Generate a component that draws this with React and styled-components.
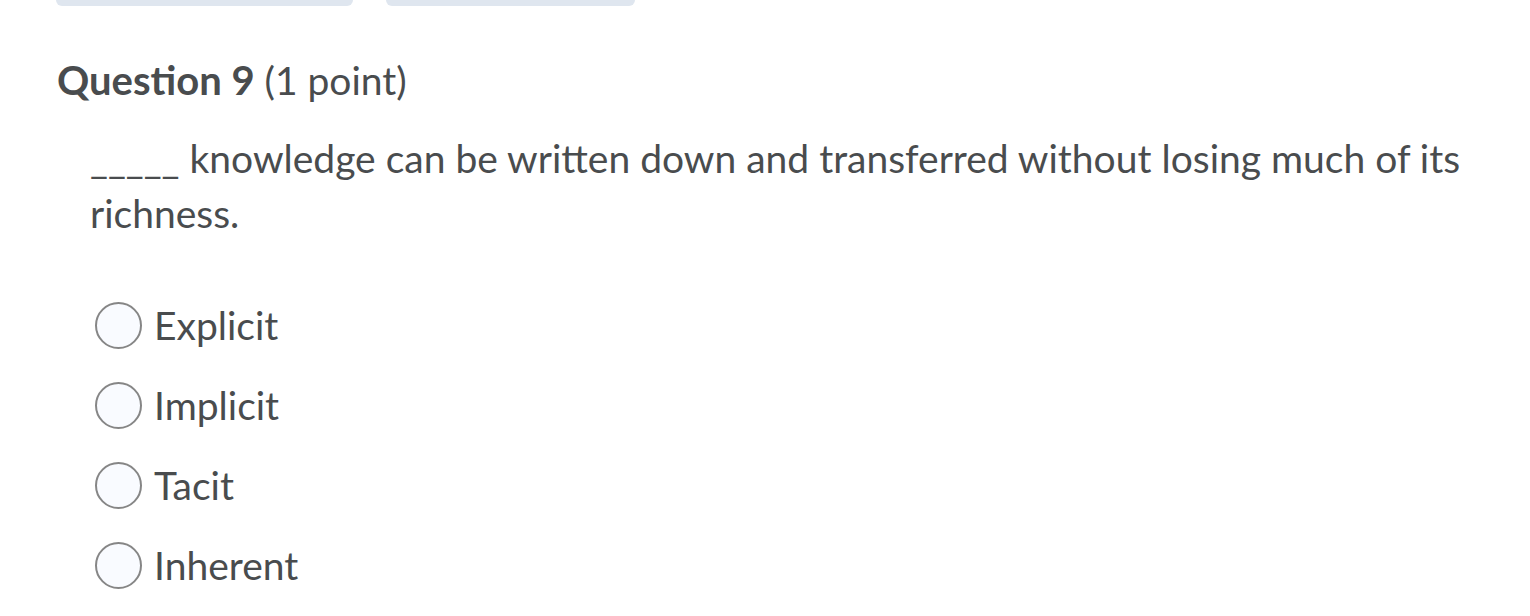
import React from "react"
import styled, { createGlobalStyle } from "styled-components"

const GlobalStyle = createGlobalStyle`
  html, body {
    margin: 0;
    padding: 0;
    background: #fff;
  }
  body {
    font-family: Lato, "Noto Sans", sans-serif;
    color: #494c4e;
  }
`

const Page = styled.div`
  width: 1530px;
  height: 616px;
  overflow: hidden;
`

const TopBar = styled.div`
  display: flex;
  gap: 33px;
  padding-left: 56px;
`

const TabButton = styled.div`
  width: ${(p) => p.w}px;
  height: 6px;
  background: #dfe6ef;
  border-radius: 0 0 10px 10px;
`

const Question = styled.section`
  padding: 52px 0 0 57px;
`

const Heading = styled.h2`
  margin: 0;
  font-size: 40px;
  line-height: 44px;
  font-weight: 700;
  color: #494c4e;
  span {
    font-weight: 400;
    font-size: 39px;
  }
`

const Prompt = styled.p`
  margin: 29px 0 0 33px;
  width: 1400px;
  font-size: 39px;
  line-height: 55px;
`

const Options = styled.ul`
  list-style: none;
  margin: 61px 0 0 38px;
  padding: 0;
  display: flex;
  flex-direction: column;
  gap: 34px;
`

const Option = styled.li`
  display: flex;
  align-items: center;
  gap: 12px;
  height: 46px;
  font-size: 39px;
`

const Radio = styled.span`
  box-sizing: border-box;
  width: 47px;
  height: 47px;
  border-radius: 50%;
  border: 2px solid #868686;
  background: #f9fbff;
  flex-shrink: 0;
`

const choices = ["Explicit", "Implicit", "Tacit", "Inherent"]

export default function App() {
  return (
    <Page>
      <GlobalStyle />
      <TopBar>
        <TabButton w={297} />
        <TabButton w={249} />
      </TopBar>
      <Question>
        <Heading>
          Question 9 <span>(1 point)</span>
        </Heading>
        <Prompt>
          _____ knowledge can be written down and transferred without losing much of its richness.
        </Prompt>
        <Options>
          {choices.map((c) => (
            <Option key={c}>
              <Radio />
              {c}
            </Option>
          ))}
        </Options>
      </Question>
    </Page>
  )
}
